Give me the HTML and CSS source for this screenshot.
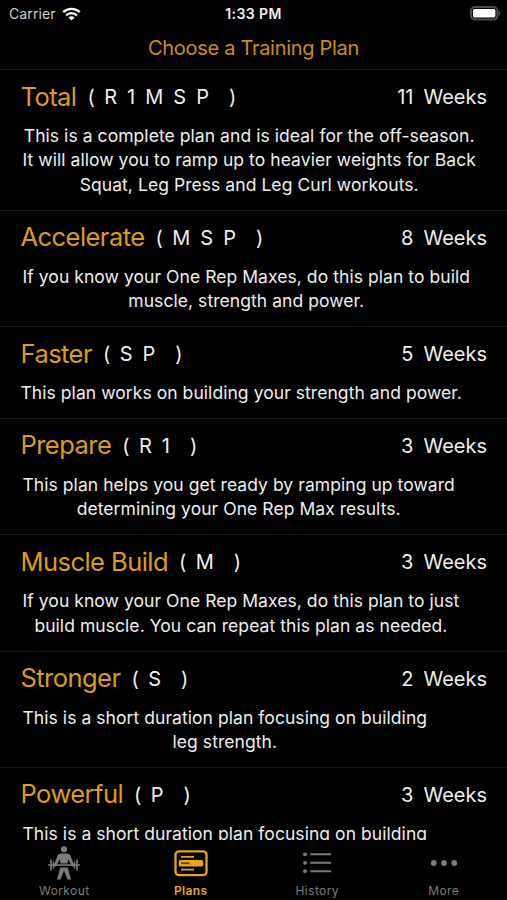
FILE: index.html
```html
<!DOCTYPE html>
<html lang="en">
<head>
    <meta charset="UTF-8">
    <meta name="viewport" content="width=device-width, initial-scale=1.0">
    <title>Choose a Training Plan</title>
    <link rel="stylesheet" href="styles.css">
</head>
<body>
    <div class="app">
        <div class="status-bar">
            <div class="carrier">
                <span>Carrier</span>
                <svg class="wifi" width="19" height="14" viewBox="0 0 19 14">
                    <path d="M1.2 5.2a12 12 0 0 1 16.6 0" />
                    <path d="M4.1 8.3a7.8 7.8 0 0 1 10.8 0" />
                    <path class="dot" d="M6.5 10.6a4.4 4.4 0 0 1 6 0l-3 3z" />
                </svg>
            </div>
            <div class="time">1:33 PM</div>
            <svg class="battery" width="31" height="15" viewBox="0 0 31 15">
                <rect class="case" x="1" y="1" width="26.4" height="12.6" rx="4" />
                <rect class="level" x="3" y="3" width="22.4" height="8.6" rx="1.5" />
                <path class="cap" d="M28.5 4.800a2.600 2.600 0 0 1 0 5z" />
            </svg>
        </div>
        <h1>Choose a Training Plan</h1>

        <div class="plans">
            <div class="plan">
                <div class="plan-header">
                    <h2>Total</h2>
                    <div class="phases"><span class="open">(</span><span>R</span><span>1</span><span>M</span><span>S</span><span>P</span><span class="close">)</span></div>
                    <div class="weeks"><span>11</span><span>Weeks</span></div>
                </div>
                <p>This is a complete plan and is ideal for the off-season.<br>It will allow you to ramp up to heavier weights for Back<br>Squat, Leg Press and Leg Curl workouts.</p>
            </div>
            <div class="plan">
                <div class="plan-header">
                    <h2>Accelerate</h2>
                    <div class="phases"><span class="open">(</span><span>M</span><span>S</span><span>P</span><span class="close">)</span></div>
                    <div class="weeks"><span>8</span><span>Weeks</span></div>
                </div>
                <p>If you know your One Rep Maxes, do this plan to build<br>muscle, strength and power.</p>
            </div>
            <div class="plan">
                <div class="plan-header">
                    <h2>Faster</h2>
                    <div class="phases"><span class="open">(</span><span>S</span><span>P</span><span class="close">)</span></div>
                    <div class="weeks"><span>5</span><span>Weeks</span></div>
                </div>
                <p class="single">This plan works on building your strength and power.</p>
            </div>
            <div class="plan">
                <div class="plan-header">
                    <h2>Prepare</h2>
                    <div class="phases"><span class="open">(</span><span>R</span><span>1</span><span class="close">)</span></div>
                    <div class="weeks"><span>3</span><span>Weeks</span></div>
                </div>
                <p>This plan helps you get ready by ramping up toward<br>determining your One Rep Max results.</p>
            </div>
            <div class="plan">
                <div class="plan-header">
                    <h2>Muscle Build</h2>
                    <div class="phases"><span class="open">(</span><span>M</span><span class="close">)</span></div>
                    <div class="weeks"><span>3</span><span>Weeks</span></div>
                </div>
                <p>If you know your One Rep Maxes, do this plan to just<br>build muscle. You can repeat this plan as needed.</p>
            </div>
            <div class="plan">
                <div class="plan-header">
                    <h2>Stronger</h2>
                    <div class="phases"><span class="open">(</span><span>S</span><span class="close">)</span></div>
                    <div class="weeks"><span>2</span><span>Weeks</span></div>
                </div>
                <p>This is a short duration plan focusing on building<br>leg strength.</p>
            </div>
            <div class="plan">
                <div class="plan-header">
                    <h2>Powerful</h2>
                    <div class="phases"><span class="open">(</span><span>P</span><span class="close">)</span></div>
                    <div class="weeks"><span>3</span><span>Weeks</span></div>
                </div>
                <p>This is a short duration plan focusing on building</p>
            </div>
        </div>

        <div class="tab-bar">
            <div class="tab">
                <svg width="34" height="36" viewBox="0 0 34 36">
                    <circle class="fill" cx="17" cy="5.3" r="3.1" />
                    <path class="fill" d="M14.500 9.500h5c2.200 0 3.700 1.200 4.400 3.200l3.300 9-2 1-4-7.500-.6 4.300h-7.200l-.6-4.300-4 7.500-2-1 3.300-9c.7-2 2.200-3.200 4.400-3.200z" />
                    <path class="line bar" d="M1 21h32M4 15.500v11M6.500 17.500v7M30 15.500v11M27.500 17.500v7" />
                    <path class="fill" d="M13.300 23.500h7.400l3.300 12h-3.500L17 26.500l-3.500 9H10z" />
                </svg>
                <span>Workout</span>
            </div>
            <div class="tab active">
                <svg width="34" height="36" viewBox="0 0 34 36">
                    <rect class="line frame" x="1.5" y="7.4" width="31" height="23.800" rx="3.500" />
                    <path class="line thin" d="M7 12.900h13M7 25.600h13" />
                    <rect class="fill" x="4.800" y="16" width="24.400" height="6.400" rx="1.500" />
                    <path class="slot" d="M7 19.200h8.500" />
                </svg>
                <span>Plans</span>
            </div>
            <div class="tab">
                <svg width="34" height="36" viewBox="0 0 34 36">
                    <path class="line" d="M10.300 10.300h20.700M10.300 18.800h20.700M10.300 27.200h20.700" />
                    <circle class="fill" cx="5" cy="10.300" r="1.900" />
                    <circle class="fill" cx="5" cy="18.800" r="1.900" />
                    <circle class="fill" cx="5" cy="27.200" r="1.900" />
                </svg>
                <span>History</span>
            </div>
            <div class="tab">
                <svg width="34" height="36" viewBox="0 0 34 36">
                    <circle class="fill" cx="6.800" cy="19" r="2.900" />
                    <circle class="fill" cx="17" cy="19" r="2.900" />
                    <circle class="fill" cx="27.200" cy="19" r="2.900" />
                </svg>
                <span>More</span>
            </div>
        </div>
    </div>
</body>
</html>
```
FILE: styles.css
```css
body {
    margin: 0;
    background-color: #000;
    color: #eee;
    font-family: Inter, "Liberation Sans", sans-serif;
}
.app {
    display: flex;
    flex-direction: column;
    height: 900px;
    overflow: hidden;
}
.status-bar {
    display: grid;
    grid-template-columns: 1fr auto 1fr;
    align-items: center;
    height: 27px;
    flex: none;
    padding: 0 6px 0 9px;
    font-size: 14px;
}
.carrier {
    display: flex;
    align-items: center;
    gap: 6px;
    color: #ccc;
    letter-spacing: 0.1px;
}
.wifi path {
    fill: none;
    stroke: #fff;
    stroke-width: 2.4;
}
.wifi .dot {
    fill: #fff;
    stroke: none;
}
.time {
    font-weight: 600;
    font-size: 14px;
    letter-spacing: 0.4px;
    margin-right: 3px;
}
.battery {
    justify-self: end;
}
.case {
    fill: none;
    stroke: #4c4c4e;
    stroke-width: 2;
}
.level {
    fill: #fff;
}
.cap {
    fill: #4c4c4e;
}
h1 {
    flex: none;
    margin: 0;
    height: 42px;
    line-height: 42px;
    text-align: center;
    font-size: 20px;
    font-weight: 400;
    letter-spacing: -0.3px;
    color: #c98f16;
}
.plans {
    flex: 1;
    overflow: hidden;
}
.plan {
    box-sizing: border-box;
    border-top: 1px solid #151515;
    padding: 9px 20px 12.5px 20.5px;
}
.plan-header {
    display: flex;
    align-items: center;
    height: 36px;
    margin-bottom: 9px;
}
h2 {
    margin: 0 0 2px;
    font-size: 25.5px;
    font-weight: 400;
    letter-spacing: -0.55px;
    color: #dc9c18;
}
.phases {
    display: flex;
    gap: 10px;
    margin-left: 11px;
    font-size: 20px;
}
.phases .open {
    margin-right: -0.6px;
}
.phases .close {
    margin-left: 10px;
}
.weeks {
    display: flex;
    gap: 10px;
    margin-left: auto;
    font-size: 20px;
}
.plan p {
    width: max-content;
    margin: 0 0 0 2px;
    font-size: 17.5px;
    line-height: 24.4px;
    letter-spacing: 0.06px;
    text-align: center;
}
.plan .single {
    margin-left: 0;
}
.tab-bar {
    display: grid;
    grid-template-columns: repeat(4, 1fr);
    flex: none;
    height: 60px;
    padding-left: 1px;
}
.tab {
    display: flex;
    flex-direction: column;
    align-items: center;
    padding-top: 4px;
    color: #7b7b7b;
    font-size: 12px;
    letter-spacing: 0.4px;
}
.tab span {
    margin-top: 3px;
}
.tab.active {
    color: #e8a317;
    font-weight: 600;
}
.fill {
    fill: currentColor;
}
.line {
    fill: none;
    stroke: currentColor;
    stroke-width: 2;
}
.bar {
    stroke-width: 1.6;
}
.frame {
    stroke-width: 2.3;
}
.thin {
    stroke-width: 1.7;
}
.slot {
    stroke: #5c400a;
    stroke-width: 1.8;
}
```
